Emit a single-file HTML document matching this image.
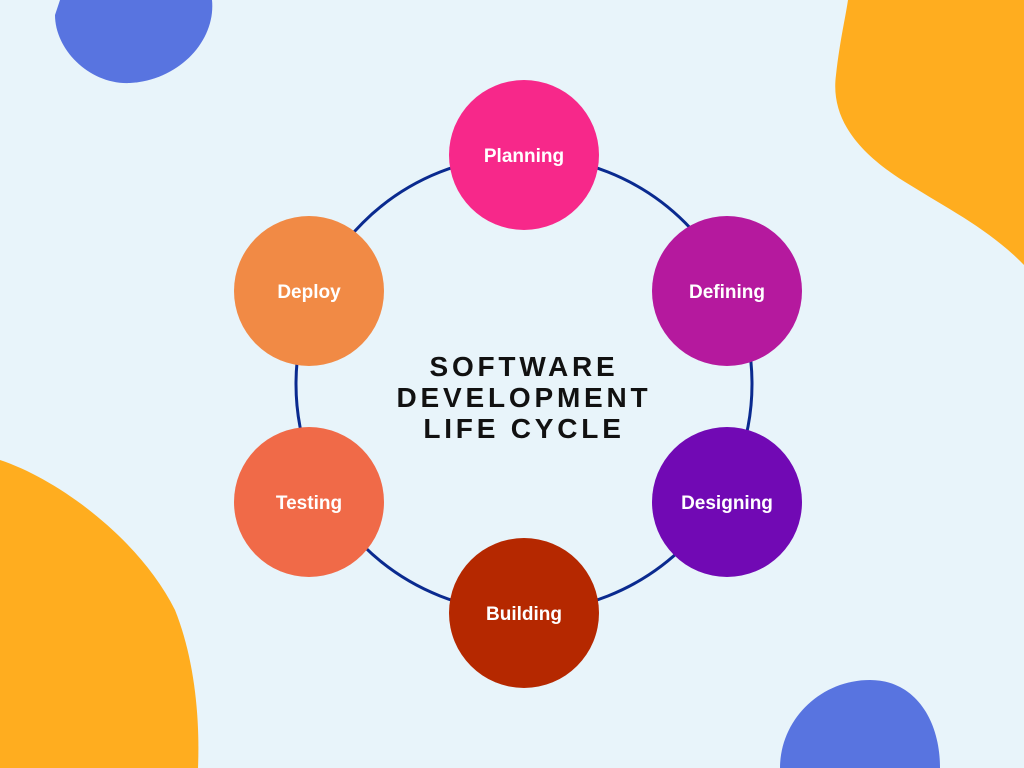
<!DOCTYPE html>
<html><head><style>
html,body{margin:0;padding:0;}
body{width:1024px;height:768px;background:#e8f4fa;position:relative;overflow:hidden;font-family:"Liberation Sans",sans-serif;}
svg{position:absolute;left:0;top:0;}
.t{position:absolute;left:324px;width:400px;text-align:center;font-weight:bold;font-size:28px;letter-spacing:3.8px;color:#111;line-height:31px;top:351px;}
.n{position:absolute;width:150px;height:150px;border-radius:50%;color:#fff;font-weight:bold;font-size:19px;display:flex;align-items:center;justify-content:center;box-sizing:border-box;padding-top:4px;}
</style></head><body>
<svg width="1024" height="768">
<path d="M60 0 H212 C216 40 180 80 130 83 C90 85 55 50 55 15 Z" fill="#5874e0"/>
<path d="M848 0 H1024 V265 C990 230 950 210 910 185 C860 155 830 120 836 75 C840 40 845 20 848 0 Z" fill="#ffad1f"/>
<path d="M0 460 C60 480 140 540 175 610 C195 660 200 720 198 768 H0 Z" fill="#ffad1f"/>
<path d="M780 768 C780 720 820 680 870 680 C915 680 940 720 940 768 Z" fill="#5874e0"/>
<circle cx="524" cy="384" r="228" fill="none" stroke="#0a2a8f" stroke-width="3"/>
</svg>
<div class="t">SOFTWARE<br>DEVELOPMENT<br>LIFE CYCLE</div>
<div class="n" style="left:449px;top:80px;background:#f7288a">Planning</div>
<div class="n" style="left:652px;top:216px;background:#b5199e">Defining</div>
<div class="n" style="left:652px;top:427px;background:#7109b4">Designing</div>
<div class="n" style="left:449px;top:538px;background:#b52800">Building</div>
<div class="n" style="left:234px;top:427px;background:#f06a48">Testing</div>
<div class="n" style="left:234px;top:216px;background:#f18a45">Deploy</div>
</body></html>
